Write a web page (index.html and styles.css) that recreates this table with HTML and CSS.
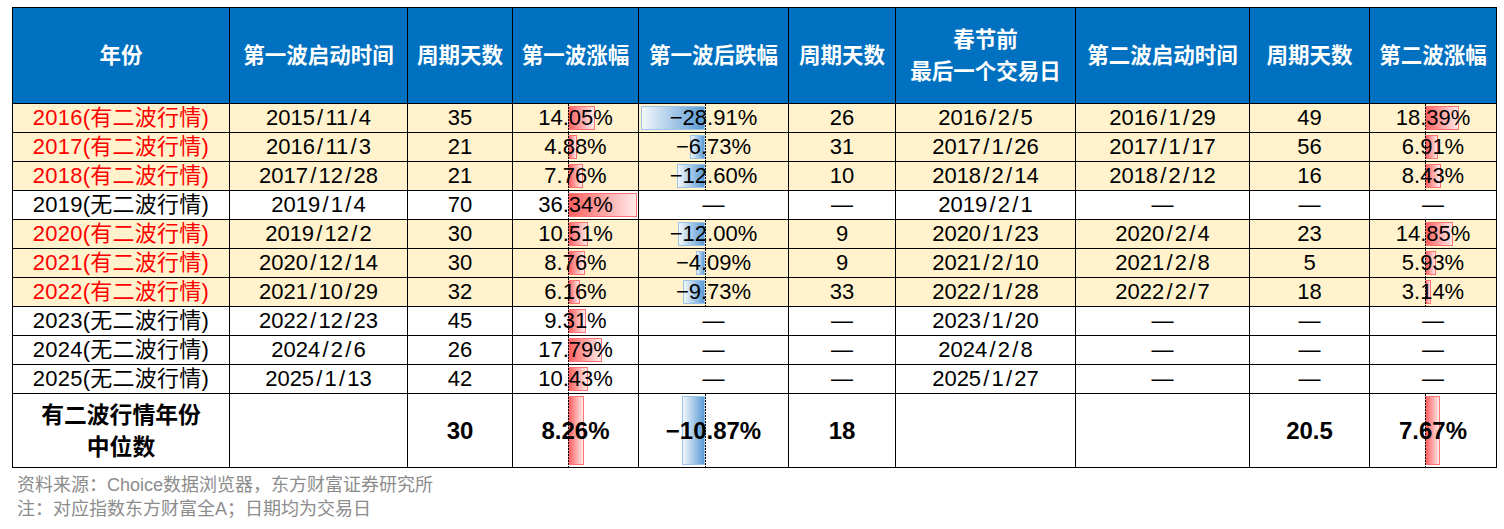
FILE: index.html
```html
<!DOCTYPE html>
<html lang="zh-CN">
<head>
<meta charset="utf-8">
<title>春节行情统计</title>
<link rel="stylesheet" href="styles.css">
</head>
<body>
<div class="page">
<table class="stats">
<colgroup>
<col class="c1"><col class="c2"><col class="c3"><col class="c4"><col class="c5"><col class="c6"><col class="c7"><col class="c8"><col class="c9"><col class="c10">
</colgroup>
<thead>
<tr>
<th>年份</th>
<th>第一波启动时间</th>
<th>周期天数</th>
<th>第一波涨幅</th>
<th>第一波后跌幅</th>
<th>周期天数</th>
<th>春节前<br>最后一个交易日</th>
<th>第二波启动时间</th>
<th>周期天数</th>
<th>第二波涨幅</th>
</tr>
</thead>
<tbody>
<tr class="hl">
<td class="red yr">2016(有二波行情)</td><td>2015<i>/</i>11<i>/</i>4</td><td>35</td>
<td class="bc b1"><span class="axis"></span><span class="bar pos" style="width:26.7px"></span><span class="val">14.05%</span></td>
<td class="bc b2"><span class="axis"></span><span class="bar neg" style="width:64.3px"></span><span class="val">−28.91%</span></td>
<td>26</td><td>2016<i>/</i>2<i>/</i>5</td><td>2016<i>/</i>1<i>/</i>29</td><td>49</td>
<td class="bc b3"><span class="axis"></span><span class="bar pos" style="width:34px"></span><span class="val">18.39%</span></td>
</tr>
<tr class="hl">
<td class="red yr">2017(有二波行情)</td><td>2016<i>/</i>11<i>/</i>3</td><td>21</td>
<td class="bc b1"><span class="axis"></span><span class="bar pos" style="width:9.3px"></span><span class="val">4.88%</span></td>
<td class="bc b2"><span class="axis"></span><span class="bar neg" style="width:15px"></span><span class="val">−6.73%</span></td>
<td>31</td><td>2017<i>/</i>1<i>/</i>26</td><td>2017<i>/</i>1<i>/</i>17</td><td>56</td>
<td class="bc b3"><span class="axis"></span><span class="bar pos" style="width:12.8px"></span><span class="val">6.91%</span></td>
</tr>
<tr class="hl">
<td class="red yr">2018(有二波行情)</td><td>2017<i>/</i>12<i>/</i>28</td><td>21</td>
<td class="bc b1"><span class="axis"></span><span class="bar pos" style="width:14.7px"></span><span class="val">7.76%</span></td>
<td class="bc b2"><span class="axis"></span><span class="bar neg" style="width:28px"></span><span class="val">−12.60%</span></td>
<td>10</td><td>2018<i>/</i>2<i>/</i>14</td><td>2018<i>/</i>2<i>/</i>12</td><td>16</td>
<td class="bc b3"><span class="axis"></span><span class="bar pos" style="width:15.6px"></span><span class="val">8.43%</span></td>
</tr>
<tr>
<td class="yr">2019(无二波行情)</td><td>2019<i>/</i>1<i>/</i>4</td><td>70</td>
<td class="bc b1"><span class="axis"></span><span class="bar pos" style="width:69px"></span><span class="val">36.34%</span></td>
<td>—</td><td>—</td><td>2019<i>/</i>2<i>/</i>1</td><td>—</td><td>—</td><td>—</td>
</tr>
<tr class="hl">
<td class="red yr">2020(有二波行情)</td><td>2019<i>/</i>12<i>/</i>2</td><td>30</td>
<td class="bc b1"><span class="axis"></span><span class="bar pos" style="width:20px"></span><span class="val">10.51%</span></td>
<td class="bc b2"><span class="axis"></span><span class="bar neg" style="width:26.7px"></span><span class="val">−12.00%</span></td>
<td>9</td><td>2020<i>/</i>1<i>/</i>23</td><td>2020<i>/</i>2<i>/</i>4</td><td>23</td>
<td class="bc b3"><span class="axis"></span><span class="bar pos" style="width:27.5px"></span><span class="val">14.85%</span></td>
</tr>
<tr class="hl">
<td class="red yr">2021(有二波行情)</td><td>2020<i>/</i>12<i>/</i>14</td><td>30</td>
<td class="bc b1"><span class="axis"></span><span class="bar pos" style="width:16.6px"></span><span class="val">8.76%</span></td>
<td class="bc b2"><span class="axis"></span><span class="bar neg" style="width:9.1px"></span><span class="val">−4.09%</span></td>
<td>9</td><td>2021<i>/</i>2<i>/</i>10</td><td>2021<i>/</i>2<i>/</i>8</td><td>5</td>
<td class="bc b3"><span class="axis"></span><span class="bar pos" style="width:11px"></span><span class="val">5.93%</span></td>
</tr>
<tr class="hl">
<td class="red yr">2022(有二波行情)</td><td>2021<i>/</i>10<i>/</i>29</td><td>32</td>
<td class="bc b1"><span class="axis"></span><span class="bar pos" style="width:11.7px"></span><span class="val">6.16%</span></td>
<td class="bc b2"><span class="axis"></span><span class="bar neg" style="width:21.6px"></span><span class="val">−9.73%</span></td>
<td>33</td><td>2022<i>/</i>1<i>/</i>28</td><td>2022<i>/</i>2<i>/</i>7</td><td>18</td>
<td class="bc b3"><span class="axis"></span><span class="bar pos" style="width:5.8px"></span><span class="val">3.14%</span></td>
</tr>
<tr>
<td class="yr">2023(无二波行情)</td><td>2022<i>/</i>12<i>/</i>23</td><td>45</td>
<td class="bc b1"><span class="axis"></span><span class="bar pos" style="width:17.7px"></span><span class="val">9.31%</span></td>
<td>—</td><td>—</td><td>2023<i>/</i>1<i>/</i>20</td><td>—</td><td>—</td><td>—</td>
</tr>
<tr>
<td class="yr">2024(无二波行情)</td><td>2024<i>/</i>2<i>/</i>6</td><td>26</td>
<td class="bc b1"><span class="axis"></span><span class="bar pos" style="width:33.8px"></span><span class="val">17.79%</span></td>
<td>—</td><td>—</td><td>2024<i>/</i>2<i>/</i>8</td><td>—</td><td>—</td><td>—</td>
</tr>
<tr>
<td class="yr">2025(无二波行情)</td><td>2025<i>/</i>1<i>/</i>13</td><td>42</td>
<td class="bc b1"><span class="axis"></span><span class="bar pos" style="width:19.8px"></span><span class="val">10.43%</span></td>
<td>—</td><td>—</td><td>2025<i>/</i>1<i>/</i>27</td><td>—</td><td>—</td><td>—</td>
</tr>
<tr class="median">
<td class="mlabel">有二波行情年份<br>中位数</td><td></td><td>30</td>
<td class="bc b1"><span class="axis"></span><span class="bar pos" style="width:15.7px"></span><span class="val">8.26%</span></td>
<td class="bc b2"><span class="axis"></span><span class="bar neg" style="width:23.5px"></span><span class="val">−10.87%</span></td>
<td>18</td><td></td><td></td><td>20.5</td>
<td class="bc b3"><span class="axis"></span><span class="bar pos" style="width:15px"></span><span class="val">7.67%</span></td>
</tr>
</tbody>
</table>
<div class="notes">
<p>资料来源：Choice数据浏览器，东方财富证券研究所</p>
<p>注：对应指数东方财富全A；日期均为交易日</p>
</div>
</div>
</body>
</html>
```
FILE: styles.css
```css
html, body {
  margin: 0;
  padding: 0;
  background: #fff;
}
body {
  font-family: "Liberation Sans", "Noto Sans CJK SC", sans-serif;
  color: #000;
}
.page {
  padding: 7px 0 0 12px;
}
.stats {
  border-collapse: collapse;
  table-layout: fixed;
  width: 1485px;
}
.c1 { width: 217px; }
.c2 { width: 178px; }
.c3 { width: 105px; }
.c4 { width: 126px; }
.c5 { width: 150px; }
.c6 { width: 107px; }
.c7 { width: 180px; }
.c8 { width: 174px; }
.c9 { width: 120px; }
.c10 { width: 127px; }

.stats th,
.stats td {
  border: 1px solid #000;
  padding: 0;
  text-align: center;
  vertical-align: middle;
  white-space: nowrap;
}
.stats th {
  background: #0070C0;
  color: #fff;
  font-weight: bold;
  font-size: 21.5px;
  line-height: 32px;
  height: 95px;
}
.stats td {
  font-size: 22px;
  line-height: 26px;
  height: 28px;
}
.stats td i {
  font-style: normal;
  margin: 0 2.2px;
}
.stats td.yr {
  letter-spacing: 0.25px;
}
.stats tr.hl td {
  background: #FFF2CC;
}
.stats td.red {
  color: #FF0000;
}
.stats tr.median td {
  height: 73px;
  font-weight: bold;
  font-size: 24px;
  line-height: 32px;
}
.stats tr.median td.mlabel {
  font-size: 22.8px;
}

.bc {
  position: relative;
}
.val {
  position: relative;
  z-index: 2;
}
.axis {
  position: absolute;
  top: 0;
  bottom: 0;
  width: 1px;
  z-index: 1;
  background: repeating-linear-gradient(to bottom, #000 0 2px, transparent 2px 3px);
}
.bar {
  position: absolute;
  top: 2px;
  bottom: 2px;
  box-sizing: border-box;
  z-index: 0;
}
.bar.pos {
  background: linear-gradient(to right, #FF5F5F, #FFEAEA);
  border: 1px solid #FF7474;
}
.bar.neg {
  background: linear-gradient(to left, #5B9BD5, #F2F7FC);
  border: 1px solid #9DC3E6;
}
.b1 .axis { left: 55px; }
.b1 .bar { left: 55px; }
.b2 .axis { left: 66px; }
.b2 .bar { right: 83px; }
.b3 .axis { left: 55px; }
.b3 .bar { left: 55px; }

.notes {
  padding: 5px 0 0 5px;
  color: #8C8C8C;
  font-size: 18px;
  line-height: 24px;
}
.notes p {
  margin: 0;
}
```
